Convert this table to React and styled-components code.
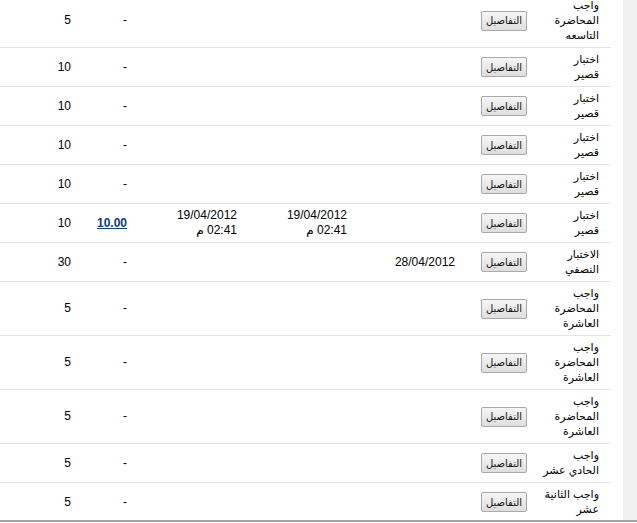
import React from "react";
import styled, { createGlobalStyle } from "styled-components";

const GlobalStyle = createGlobalStyle`
  html, body {
    margin: 0;
    padding: 0;
    background: #fff;
  }
`;

const Frame = styled.div`
  width: 637px;
  height: 520px;
  display: flex;
  overflow: hidden;
  border-bottom: 2px solid #a3a3a3;
  font-family: "Liberation Sans", "DejaVu Sans", sans-serif;
  font-size: 12px;
  color: #000;
`;

const Content = styled.div`
  flex: 1;
  overflow: hidden;
  background: #fff;
`;

const Track = styled.div`
  width: 14px;
  background: #f0f0f0;
`;

const Table = styled.table`
  direction: rtl;
  width: 611px;
  margin-top: -6px;
  border-collapse: collapse;
  table-layout: fixed;
`;

const Row = styled.tr`
  border-bottom: 1px solid ${({ $last }) => ($last ? "transparent" : "#e5e5e5")};
`;

const Cell = styled.td`
  padding: 4px ${({ $pr }) => $pr || 5}px 4px 5px;
  line-height: 15px;
  font-size: ${({ $small }) => ($small ? 11 : 12)}px;
  text-align: ${({ $center }) => ($center ? "center" : "right")};
  vertical-align: middle;
  white-space: nowrap;
`;

const Line = styled.div`
  line-height: 15px;
`;

const Button = styled.button`
  width: 46px;
  height: 20px;
  padding: 0;
  border: 1px solid #a9a9a9;
  border-radius: 2px;
  background: linear-gradient(#f6f6f6, #dedede);
  font-family: "DejaVu Sans", sans-serif;
  font-size: 10px;
  color: #111;
  vertical-align: middle;
`;

const Grade = styled.a`
  font-weight: bold;
  color: #0b3c78;
  text-decoration: underline;
`;

const rows = [
  { name: ["واجب", "المحاضرة", "التاسعه"], total: "5" },
  { name: ["اختبار", "قصير"], total: "10" },
  { name: ["اختبار", "قصير"], total: "10" },
  { name: ["اختبار", "قصير"], total: "10" },
  { name: ["اختبار", "قصير"], total: "10" },
  {
    name: ["اختبار", "قصير"],
    total: "10",
    grade: "10.00",
    start: ["19/04/2012", "02:41 م"],
    end: ["19/04/2012", "02:41 م"],
  },
  { name: ["الاختبار", "النصفي"], total: "30", due: "28/04/2012" },
  { name: ["واجب", "المحاضرة", "العاشرة"], total: "5" },
  { name: ["واجب", "المحاضرة", "العاشرة"], total: "5" },
  { name: ["واجب", "المحاضرة", "العاشرة"], total: "5" },
  { name: ["واجب", "الحادي عشر"], total: "5" },
  { name: ["واجب الثانية", "عشر"], total: "5" },
];

const Lines = ({ items }) =>
  items ? items.map((t, i) => <Line key={i}>{t}</Line>) : null;

const App = () => {
  return (
    <>
      <GlobalStyle />
      <Frame>
        <Content>
          <Table>
            <colgroup>
              <col style={{ width: 63 }} />
              <col style={{ width: 88 }} />
              <col style={{ width: 108 }} />
              <col style={{ width: 110 }} />
              <col style={{ width: 110 }} />
              <col style={{ width: 56 }} />
              <col style={{ width: 76 }} />
            </colgroup>
            <tbody>
              {rows.map((r, i) => (
                <Row key={i} $last={i === rows.length - 1}>
                  <Cell $pr={12} $small>
                    <Lines items={r.name} />
                  </Cell>
                  <Cell $center>
                    <Button>التفاصيل</Button>
                  </Cell>
                  <Cell>{r.due}</Cell>
                  <Cell>
                    <Lines items={r.end} />
                  </Cell>
                  <Cell>
                    <Lines items={r.start} />
                  </Cell>
                  <Cell>{r.grade ? <Grade href="#">{r.grade}</Grade> : "-"}</Cell>
                  <Cell>{r.total}</Cell>
                </Row>
              ))}
            </tbody>
          </Table>
        </Content>
        <Track />
      </Frame>
    </>
  );
};

export default App;
